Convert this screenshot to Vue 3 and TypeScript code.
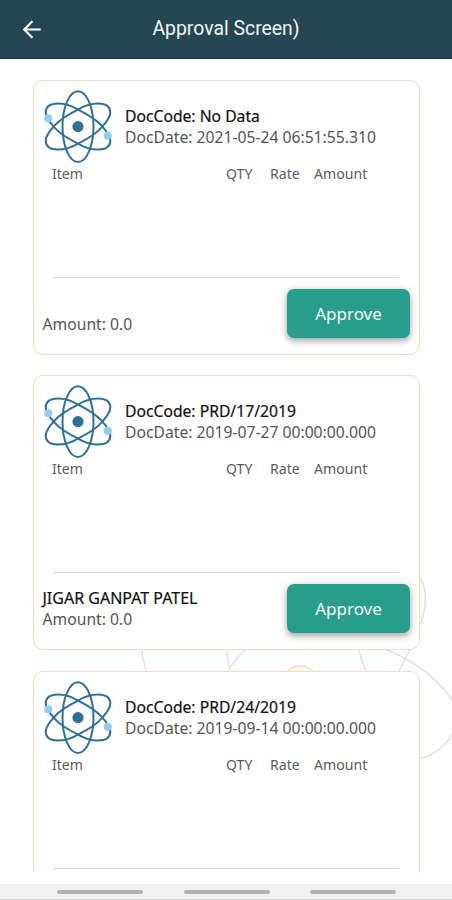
<script setup lang="ts">
interface Summary {
  party: string
  amount: string
}

interface Doc {
  code: string
  date: string
  summary?: Summary
}

const docs: Doc[] = [
  { code: 'No Data', date: '2021-05-24 06:51:55.310', summary: { party: '', amount: '0.0' } },
  { code: 'PRD/17/2019', date: '2019-07-27 00:00:00.000', summary: { party: 'JIGAR GANPAT PATEL', amount: '0.0' } },
  { code: 'PRD/24/2019', date: '2019-09-14 00:00:00.000' },
]

const orbit =
  'M-32.3-14C-32.3-21-27-23-20-23C-13-23-5-20 0-17C9-12.5 19-6 23.5-1C29 5 32.3 10 32.3 14C32.3 21 27 23 20 23C13 23 5 20 0 17C-9 12.5-19 6-23.5 1C-29-5-32.3-10-32.3-14Z'
</script>

<template>
  <div class="screen">
    <header class="bar">
      <svg class="back" width="20" height="20" viewBox="0 0 20 20" fill="none" stroke="#fff" stroke-width="2.1">
        <path d="M18.7 10.5H2.8M10.4 2.2L2.2 10.5l8.2 8.3" />
      </svg>
      <h1>Approval Screen)</h1>
    </header>

    <main class="list">
      <svg class="backdrop" width="452" height="814" viewBox="0 58 452 814" fill="none" stroke="#e1e1e3" stroke-width="1.4">
        <path d="M141.5 648Q142 659 147 673M226 648L230 673M247 648Q237 657 229 669M358 648L366 673M411 648L398 673" />
        <path d="M380 647C409 658 434 675 450 697C466 720 450 752 418 759" />
        <path d="M419 576C428 588 427 610 419 627" />
        <circle cx="300.5" cy="685" r="19" fill="#fdf3e4" />
      </svg>

      <article v-for="doc in docs" :key="doc.code" class="card">
        <div class="head">
          <svg class="atom" width="72" height="74" viewBox="-36 -36.6 72 74" fill="none" stroke="#2f6f98" stroke-width="2">
            <ellipse rx="15.5" ry="35.3" />
            <path :d="orbit" />
            <path :d="orbit" transform="scale(-1 1)" />
            <circle r="5.6" fill="#2f6f98" stroke="none" />
            <circle cx="-29.7" cy="-8.3" r="4" fill="#8fcdf3" stroke="none" />
            <circle cx="29.8" cy="9.2" r="4" fill="#8fcdf3" stroke="none" />
          </svg>
          <div class="info">
            <p class="strong">DocCode: {{ doc.code }}</p>
            <p class="date">DocDate: {{ doc.date }}</p>
          </div>
        </div>
        <div class="columns">
          <span>Item</span><span>QTY</span><span>Rate</span><span>Amount</span>
        </div>
        <div class="items"></div>
        <footer v-if="doc.summary" class="foot">
          <div class="totals">
            <p class="strong party">{{ doc.summary.party }}</p>
            <p class="amount">Amount: {{ doc.summary.amount }}</p>
          </div>
          <button class="approve" type="button">Approve</button>
        </footer>
      </article>
    </main>

    <nav class="nav"><i></i><i></i><i></i></nav>
  </div>
</template>

<style>
body {
  margin: 0;
  overflow: hidden;
}
</style>

<style scoped>
.screen {
  width: 452px;
  height: 900px;
  display: flex;
  flex-direction: column;
  background: #fefefe;
  font-family: "Noto Sans", sans-serif;
  overflow: hidden;
}
.bar {
  box-sizing: border-box;
  height: 59px;
  flex: none;
  display: grid;
  grid-template-columns: 20px 1fr 20px;
  align-items: center;
  padding: 0 22px 1px;
  background: #264653;
  border-bottom: 1px solid #143244;
}
h1 {
  margin: 0;
  font: 400 19.4px/24px Roboto, sans-serif;
  text-align: center;
  color: #f2f5f6;
}
.list {
  position: relative;
  box-sizing: border-box;
  height: 813px;
  flex: none;
  display: flex;
  flex-direction: column;
  gap: 20.5px;
  padding: 20.8px 32px 0 33px;
  overflow: hidden;
}
.backdrop {
  position: absolute;
  left: 0;
  top: -1px;
}
.card {
  position: relative;
  box-sizing: border-box;
  height: 275px;
  flex: none;
  display: flex;
  flex-direction: column;
  border: 1px solid #f3dcc4;
  border-radius: 10px;
  background: #fefefe;
}
.head {
  display: flex;
  padding: 9px 0 0 8px;
  height: 73px;
}
.info {
  padding: 16px 0 0 11px;
}
p {
  margin: 0;
  white-space: nowrap;
  font-size: 15.7px;
  line-height: 21px;
  color: #555;
}
p.strong {
  color: #111;
  -webkit-text-stroke: 0.2px #111;
}
p.party {
  font-size: 16px;
  min-height: 21px;
}
.columns {
  display: grid;
  grid-template-columns: 174px 44px 44px auto;
  padding-left: 18px;
  margin-top: 1px;
  font-size: 14.1px;
  line-height: 20px;
  color: #5c5c5c;
}
.items {
  height: 93px;
  margin: 0 20px 0 19px;
  border-bottom: 1px solid #dadada;
}
.foot {
  display: flex;
  justify-content: space-between;
  padding: 11px 9px 0 8.5px;
}
.totals {
  padding-top: 4px;
}
.approve {
  width: 123px;
  height: 49px;
  border: 0;
  border-radius: 7px;
  padding: 0;
  background: #289d8c;
  color: #f4fffd;
  font: 400 17px/49px "Noto Sans", sans-serif;
  box-shadow: 0 3px 6px rgba(0, 0, 0, 0.28), 0 1px 10px rgba(0, 0, 0, 0.13);
}
.nav {
  flex: 1;
  margin-top: 12px;
  box-sizing: border-box;
  display: flex;
  justify-content: space-between;
  padding: 6px 56px 0 57px;
  background: #f1f1f1;
  border-bottom: 1px solid #d2d2d2;
}
.nav i {
  width: 86px;
  height: 4px;
  border-radius: 2px;
  background: #b2b2b2;
}
</style>
